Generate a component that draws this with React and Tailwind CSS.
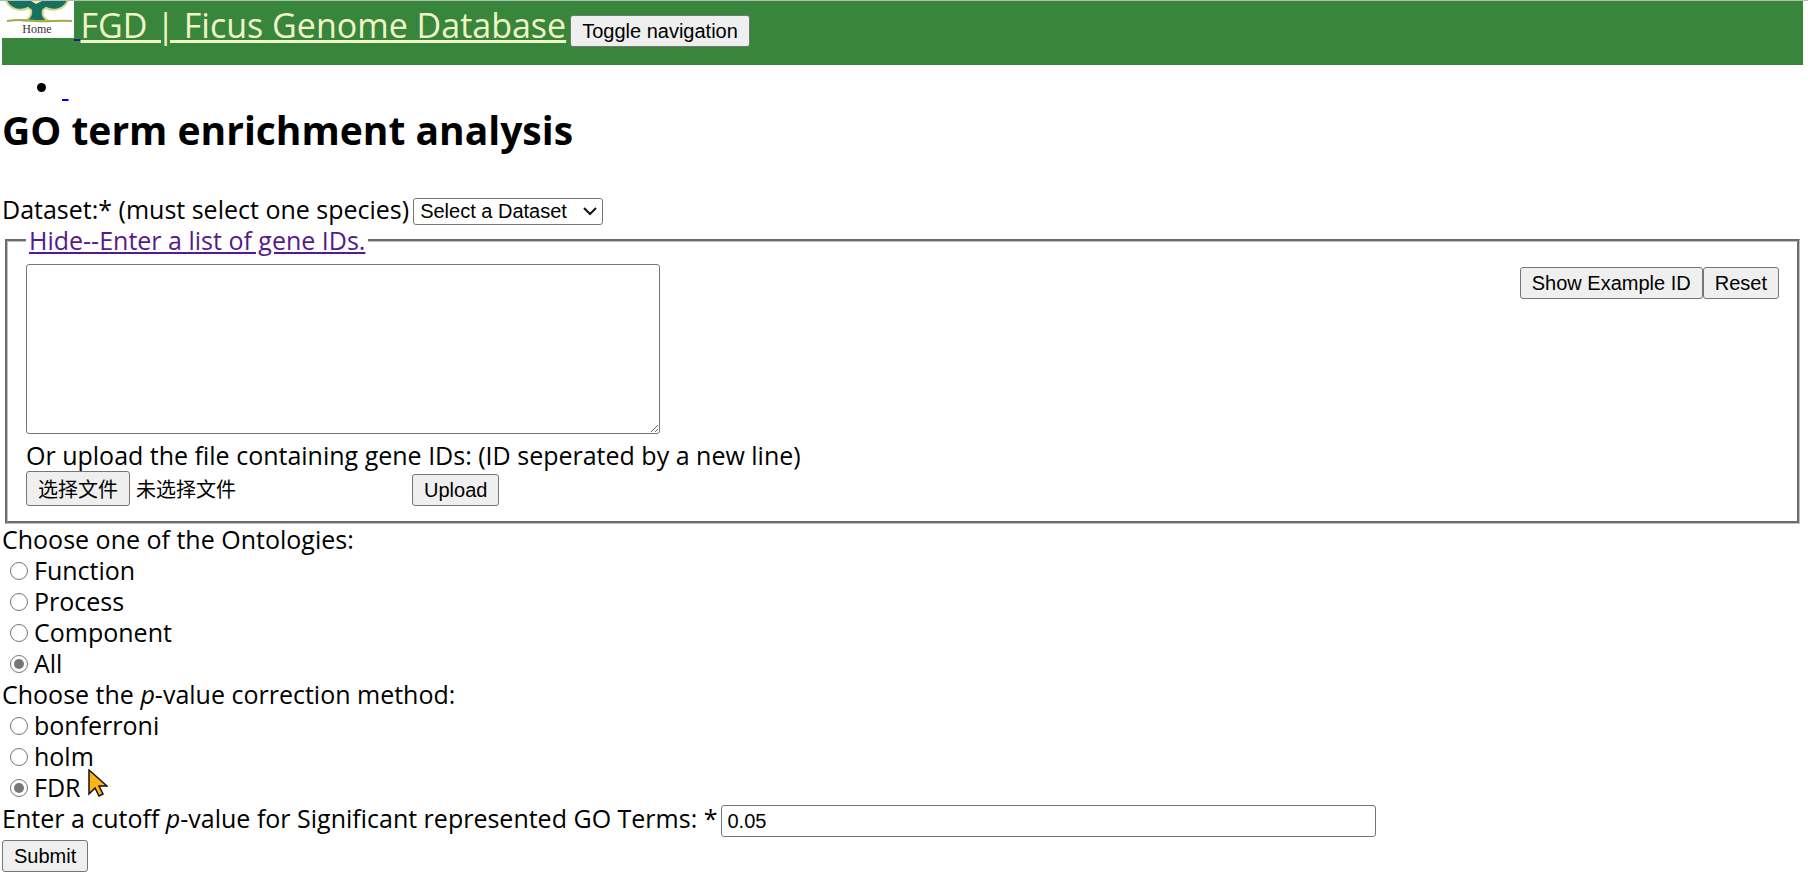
import React, { useState } from 'react';

const ONTOLOGIES = ['Function', 'Process', 'Component', 'All'];
const METHODS = ['bonferroni', 'holm', 'FDR'];

const buttonStyle = 'rounded-[3px] border border-[#767676] bg-[#efefef] h-8 px-[11px] font-[Liberation_Sans,sans-serif] text-[20px] leading-[28px]';

const TreeLogo = () => (
  <svg width="72" height="37" viewBox="0 0 72 37" className="block shrink-0 bg-white" role="img" aria-label="Home">
    <path d="M4 -1C7 8 18 11 26 7L29 9C30 14 28 17 23 20H47C41 17 40 14 41 9L44 7C52 11 63 8 66 -1Z" fill="#167060" stroke="#d3d685" strokeWidth="2" />
    <path d="M29 0L34 3L40 0Z" fill="#e9eeb4" />
    <path d="M5 20C18 18 25 19 34 20S58 19 70 20" fill="none" stroke="#a5a84a" strokeWidth="2" />
    <text x="35" y="32" textAnchor="middle" fontFamily="Liberation Serif, serif" fontSize="12" fill="#333">Home</text>
  </svg>
);

const RadioGroup = ({ name, options, value, onChange }) => (
  <div>
    {options.map((option) => (
      <label key={option} className="flex w-fit items-center gap-[6px] pl-2 h-[31px]">
        <input
          type="radio"
          name={name}
          checked={value === option}
          onChange={() => onChange(option)}
          className="size-[18px] appearance-none rounded-full border border-[#767676] bg-white p-[3px] checked:bg-[#767676] checked:bg-clip-content"
        />
        {option}
      </label>
    ))}
  </div>
);

export default function App() {
  const [visible, setVisible] = useState(true);
  const [ids, setIds] = useState('');
  const [fileName, setFileName] = useState('');
  const [ontology, setOntology] = useState('All');
  const [method, setMethod] = useState('FDR');
  const [cutoff, setCutoff] = useState('0.05');

  return (
    <div className="border-t border-[#b4bdb4] bg-white pl-[2px] pr-[5px] font-[Open_Sans,sans-serif] text-[25px] leading-[31px] text-black">
      <header className="flex h-16 items-start bg-[#38853c]">
        <a href="#" className="flex items-start text-[#1a1a8c] underline">
          <TreeLogo />
          <span className="pt-[11px] whitespace-pre"> </span>
        </a>
        <a href="#" className="text-[34px] leading-[48px] text-[#f0f5c8] underline">FGD | Ficus Genome Database</a>
        <button type="button" className={`${buttonStyle} ml-1 mt-[14px]`}>Toggle navigation</button>
      </header>

      <ul className="list-disc pl-[60px]">
        <li className="h-[41px] pt-[7px]"><a href="#" className="text-[#0000ee] underline">&nbsp;</a></li>
      </ul>

      <h1 className="text-[39px] font-bold leading-[48px]">GO term enrichment analysis</h1>

      <form className="pt-[39px]" onSubmit={(e) => e.preventDefault()}>
        <div className="flex h-8 items-center gap-1">
          <label htmlFor="dataset">Dataset:* (must select one species)</label>
          <div className="relative mt-[5px] flex">
            <select id="dataset" className="h-[27px] w-[190px] appearance-none rounded-[3px] border border-[#767676] bg-white pl-[6px] font-[Liberation_Sans,sans-serif] text-[20px] leading-[25px]">
              <option>Select a Dataset</option>
            </select>
            <svg width="14" height="9" viewBox="0 0 14 9" className="pointer-events-none absolute right-[6px] top-[9px]" aria-hidden="true">
              <path d="M1 1L7 7L13 1" fill="none" stroke="#111" strokeWidth="2" />
            </svg>
          </div>
        </div>

        <fieldset className="mx-[3px] border-[3px] border-[#c0c0c0] px-[18px] pb-[15px] [border-style:groove]">
          <legend className="px-[3px]">
            <a href="#" className="text-[#551a8b] underline" onClick={(e) => { e.preventDefault(); setVisible(!visible); }}>Hide--Enter a list of gene IDs.</a>
          </legend>
          {visible && (
            <>
              <div className="flex items-start justify-between pt-2">
                <textarea
                  aria-label="Gene IDs"
                  value={ids}
                  onChange={(e) => setIds(e.target.value)}
                  className="h-[170px] w-[634px] rounded-[3px] border border-[#767676] p-1 text-[20px]"
                />
                <div className="mt-[3px] flex">
                  <button type="button" className={buttonStyle}>Show Example ID</button>
                  <button type="button" className={buttonStyle} onClick={() => setIds('')}>Reset</button>
                </div>
              </div>
              <p className="pt-[6px]">Or upload the file containing gene IDs: (ID seperated by a new line)</p>
              <div className="flex items-end font-[Liberation_Sans,Noto_Sans_CJK_SC,sans-serif] text-[20px]">
                <div className="flex w-[386px] items-center gap-[6px]">
                  <input id="geneFile" type="file" className="peer sr-only" onChange={(e) => setFileName(e.target.files[0]?.name || '')} />
                  <label htmlFor="geneFile" className="h-[35px] rounded-[3px] border border-[#767676] bg-[#efefef] px-[11px] leading-[36px]">选择文件</label>
                  <span className="pt-1">{fileName || '未选择文件'}</span>
                </div>
                <button type="button" className={buttonStyle}>Upload</button>
              </div>
            </>
          )}
        </fieldset>

        <p>Choose one of the Ontologies:</p>
        <RadioGroup name="ontology" options={ONTOLOGIES} value={ontology} onChange={setOntology} />
        <p>Choose the <i>p</i>-value correction method:</p>
        <RadioGroup name="method" options={METHODS} value={method} onChange={setMethod} />

        <div className="flex h-[35px] items-start gap-1">
          <label htmlFor="cutoff">Enter a cutoff <i>p</i>-value for Significant represented GO Terms: *</label>
          <input
            id="cutoff"
            type="text"
            value={cutoff}
            onChange={(e) => setCutoff(e.target.value)}
            className="mt-[2px] h-8 w-[655px] rounded-[3px] border border-[#767676] px-[5px] font-[Liberation_Sans,sans-serif] text-[20px]"
          />
        </div>
        <button type="submit" className={buttonStyle}>Submit</button>
      </form>

      <svg width="20" height="28" viewBox="0 0 20 28" className="pointer-events-none absolute left-[88px] top-[769px]" aria-hidden="true">
        <path d="M1 1V25L7 19L11 27L15 25L11 17H19Z" fill="#fdb515" stroke="#111" strokeWidth="1.5" />
      </svg>
    </div>
  );
}
